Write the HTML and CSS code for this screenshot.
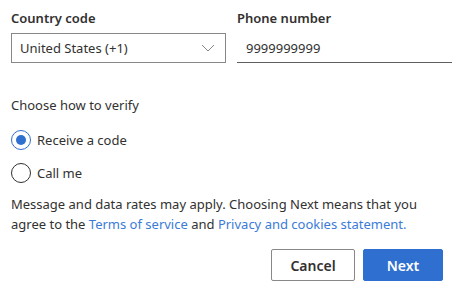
FILE: index.html
```html
<!DOCTYPE html>
<html lang="en">
<head>
  <meta charset="UTF-8" />
  <title>Verify phone</title>
  <link rel="stylesheet" href="styles.css">
</head>
<body>
  <div class="panel">
    <div class="field-row">
      <div class="field country">
        <label class="field-label">Country code</label>
        <div class="select-box">
          <span>United States (+1)</span>
          <svg class="chevron" width="14" height="8" viewBox="0 0 14 8">
            <path d="M1 1 L7 7 L13 1" fill="none" stroke="#8a8886" stroke-width="1"/>
          </svg>
        </div>
      </div>
      <div class="field phone">
        <label class="field-label">Phone number</label>
        <div class="line-input">9999999999</div>
      </div>
    </div>

    <div class="section-title">Choose how to verify</div>

    <div class="radio-list">
      <div class="radio-item">
        <span class="radio checked"></span>
        <span>Receive a code</span>
      </div>
      <div class="radio-item">
        <span class="radio"></span>
        <span>Call me</span>
      </div>
    </div>

    <p class="notice">
      Message and data rates may apply. Choosing Next means that you
      agree to the <a href="#">Terms of service</a> and <a href="#">Privacy and cookies statement.</a>
    </p>

    <div class="actions">
      <button class="btn btn-secondary">Cancel</button>
      <button class="btn btn-primary">Next</button>
    </div>
  </div>
</body>
</html>
```

FILE: styles.css
```css
body {
  margin: 0;
  background-color: white;
  font-family: "Segoe UI", "Noto Sans", sans-serif;
  font-size: 13px;
  color: #323130;
}

.panel {
  padding: 8px 7px 0 11px;
}

.field-row {
  display: flex;
  gap: 11px;
}

.field {
  display: flex;
  flex-direction: column;
}

.country {
  width: 215px;
}

.phone {
  flex: 1;
}

.field-label {
  font-weight: 600;
  line-height: 20px;
  margin-bottom: 5px;
}

.select-box {
  height: 30px;
  border: 1px solid #8a8886;
  box-sizing: border-box;
  display: flex;
  align-items: center;
  justify-content: space-between;
  padding: 0 10px 0 8px;
}

.line-input {
  height: 30px;
  border-bottom: 1px solid #605e5c;
  box-sizing: border-box;
  display: flex;
  align-items: center;
  padding-left: 9px;
}

.section-title {
  margin-top: 32px;
  line-height: 20px;
}

.radio-list {
  margin-top: 15px;
  display: flex;
  flex-direction: column;
  gap: 13px;
}

.radio-item {
  display: flex;
  align-items: center;
  gap: 6px;
  line-height: 20px;
}

.radio {
  width: 20px;
  height: 20px;
  border: 1px solid #323130;
  border-radius: 50%;
  box-sizing: border-box;
  position: relative;
}

.radio.checked {
  border-color: #2f6fcf;
}

.radio.checked::after {
  content: "";
  position: absolute;
  left: 4px;
  top: 4px;
  width: 10px;
  height: 10px;
  border-radius: 50%;
  background-color: #2f6fcf;
}

.notice {
  margin: 11px 0 0 0;
  line-height: 20px;
}

.notice a {
  color: #3b7bd8;
  text-decoration: none;
}

.actions {
  display: flex;
  justify-content: flex-end;
  gap: 8px;
  margin-top: 15px;
  padding-right: 9px;
}

.btn {
  height: 32px;
  font-family: inherit;
  font-size: 14px;
  font-weight: 600;
  border-radius: 2px;
  cursor: pointer;
}

.btn-secondary {
  width: 84px;
  background-color: white;
  border: 1px solid #8a8886;
  color: #323130;
}

.btn-primary {
  width: 80px;
  background-color: #2f6fcf;
  border: 1px solid #2f6fcf;
  color: white;
}
```
